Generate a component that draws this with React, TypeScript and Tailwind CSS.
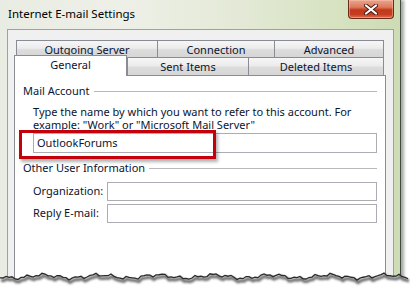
import React from "react";

const font = { fontFamily: '"Noto Sans", "Liberation Sans", sans-serif' };

function TornEdge() {
  const pts: [number, number][] = [];
  for (let x = 0; x <= 410; x += 3) {
    const y =
      9.5 +
      1.6 * Math.sin(x * 0.11) +
      1.2 * Math.sin(x * 0.37 + 1.3) +
      0.8 * Math.sin(x * 0.83 + 0.4);
    pts.push([x, y]);
  }
  const line = pts.map(([x, y]) => `${x},${y.toFixed(2)}`).join(" ");
  const poly = `0,20 ${line} 410,20`;
  return (
    <svg
      className="absolute left-0 top-[267px]"
      width="410"
      height="20"
      viewBox="0 0 410 20"
    >
      <defs>
        <filter id="blur" x="-10%" y="-50%" width="120%" height="200%">
          <feGaussianBlur stdDeviation="1.2" />
        </filter>
      </defs>
      <polygon points={poly} fill="#ffffff" />
      <polyline
        points={line}
        fill="none"
        stroke="#6a6a6a"
        strokeWidth="3"
        transform="translate(1,2.5)"
        filter="url(#blur)"
      />
      <polyline points={line} fill="none" stroke="#2a2a2a" strokeWidth="1.3" />
    </svg>
  );
}

function CloseButton() {
  return (
    <div className="absolute right-[6px] top-0 w-[46px] h-[19px] rounded-b-[4px] border border-t-0 border-[#6b2b1c] bg-[linear-gradient(to_bottom,#eaa58f_0%,#dc7a5e_40%,#c2381b_55%,#c63d20_80%,#e0704f_100%)] flex items-center justify-center shadow-[inset_0_0_0_1px_rgba(255,200,180,0.45)]">
      <svg width="14" height="11" viewBox="0 0 14 11">
        <path d="M2 1.5 L12 9.5 M12 1.5 L2 9.5" stroke="#4a1a10" strokeWidth="4" strokeLinecap="round" />
        <path d="M2 1.5 L12 9.5 M12 1.5 L2 9.5" stroke="#ffffff" strokeWidth="2.2" strokeLinecap="round" />
      </svg>
    </div>
  );
}

function Tab({ label, w, selected }: { label: string; w: string; selected?: boolean }) {
  if (selected) {
    return (
      <div
        className={`${w} -ml-[2px] -mt-[2px] h-[21px] relative z-10 bg-white border border-b-0 border-[#898c95] flex items-start justify-center pt-[1px] text-[11px] leading-[15px] text-[#0b1530]`}
      >
        {label}
      </div>
    );
  }
  return (
    <div
      className={`${w} h-full border border-b-0 border-r-0 last:border-r border-[#898c95] bg-[linear-gradient(to_bottom,#f6f6f6_0%,#ececec_45%,#dcdcdc_55%,#d6d6d6_100%)] flex items-center justify-center text-[11px] leading-[15px] text-[#0b1530]`}
    >
      {label}
    </div>
  );
}

function GroupHeader({ label }: { label: string }) {
  return (
    <div className="flex items-center h-[14px] gap-[4px] pr-[8px]">
      <span className="text-[11px] leading-[14px] text-[#0b1530] whitespace-nowrap">{label}</span>
      <div className="flex-1 h-px bg-[#b9b9b9]" />
    </div>
  );
}

export default function App() {
  return (
    <div className="relative w-[410px] h-[287px] overflow-hidden bg-white" style={font}>
      <div className="relative w-[401px] h-[287px] border-r border-[#3e4a3c] shadow-[3px_0_3px_rgba(0,0,0,0.35)] bg-[linear-gradient(to_right,#e9ece2_0%,#eef0e8_30%,#e3e9d6_60%,#d6e2c0_85%,#cddcb4_100%)] flex flex-col">
        <div className="h-[29px] flex items-center pl-[8px] pb-[1px] text-[11.5px] text-black">
          Internet E-mail Settings
        </div>
        <CloseButton />
        <div className="ml-[7px] mr-[6px] flex-1 border-l border-t border-r border-[#9aa59a] bg-[#f0f0f0] pl-[6px] pr-[7px] pt-[10px] flex flex-col">
          <div className="flex mx-[2px] h-[17px]">
            <Tab label="Outgoing Server" w="w-[141px]" />
            <Tab label="Connection" w="w-[117px]" />
            <Tab label="Advanced" w="w-[110px]" />
          </div>
          <div className="flex mx-[2px] h-[18px]">
            <Tab label="General" w="w-[113px]" selected />
            <Tab label="Sent Items" w="w-[121px]" />
            <Tab label="Deleted Items" w="w-[136px]" />
          </div>
          <div className="flex-1 border border-[#898c95] bg-white pl-[8px] pt-[8px] flex flex-col">
            <GroupHeader label="Mail Account" />
            <div className="pl-[10px] mt-[7px] text-[11px] leading-[13px] text-[#0b1530]">
              <div>Type the name by which you want to refer to this account. For</div>
              <div>example: "Work" or "Microsoft Mail Server"</div>
            </div>
            <div className="ml-[10px] mr-[8px] mt-[2px] h-[20px] border border-[#abadb3] flex items-center pl-[3px] text-[11px] text-[#0b1530]">
              OutlookForums
            </div>
            <div className="mt-[8px]">
              <GroupHeader label="Other User Information" />
            </div>
            <div className="flex items-center mt-[7px] pl-[10px] pr-[8px]">
              <span className="w-[74px] text-[11px] text-[#0b1530]">Organization:</span>
              <div className="flex-1 h-[19px] border border-[#abadb3]" />
            </div>
            <div className="flex items-center mt-[3px] pl-[10px] pr-[8px]">
              <span className="w-[74px] text-[11px] text-[#0b1530]">Reply E-mail:</span>
              <div className="flex-1 h-[19px] border border-[#abadb3]" />
            </div>
          </div>
        </div>
      </div>
      <div className="absolute left-[19px] top-[130px] w-[197px] h-[29px] border-[3px] border-[#c4000b] shadow-[2px_3px_3px_rgba(0,0,0,0.3)]" />
      <TornEdge />
    </div>
  );
}
